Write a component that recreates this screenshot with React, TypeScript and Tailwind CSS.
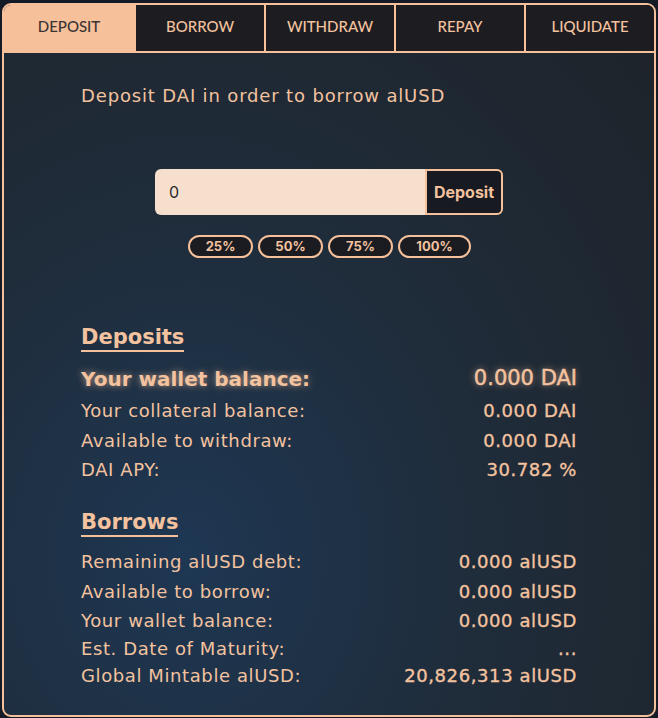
import React from "react";

const tabs = ["DEPOSIT", "BORROW", "WITHDRAW", "REPAY", "LIQUIDATE"];

const depositRows: [string, string][] = [
  ["Your collateral balance:", "0.000 DAI"],
  ["Available to withdraw:", "0.000 DAI"],
  ["DAI APY:", "30.782 %"],
];

const borrowRows: [string, string, string][] = [
  ["Remaining alUSD debt:", "0.000 alUSD", "h-[30px]"],
  ["Available to borrow:", "0.000 alUSD", "h-[30px]"],
  ["Your wallet balance:", "0.000 alUSD", "h-[29px]"],
  ["Est. Date of Maturity:", "...", "h-[27px]"],
  ["Global Mintable alUSD:", "20,826,313 alUSD", "h-[27px]"],
];

// slightly heavier stroke for the figures on the right
const figure = "[-webkit-text-stroke:0.35px_#f3c29f]";

export default function App() {
  return (
    <div className="min-h-[718px] w-[658px] bg-[#141b26] pt-[3px] pl-[2px] font-['DejaVu_Sans',sans-serif] text-[#f3c29f]">
      <div className="flex h-[714px] w-[654px] flex-col overflow-hidden rounded-[9px] border-2 border-[#f5c09a] bg-[radial-gradient(ellipse_at_28%_78%,#1e3753_0%,#1f2c3a_45%,#1e2329_100%)]">
        {/* tab strip */}
        <div className="flex h-[48px] shrink-0 border-b-2 border-[#f5c09a] font-['Lato',sans-serif] text-[15px] font-medium">
          {tabs.map((t, i) => (
            <div
              key={t}
              className={
                i === 0
                  ? "flex w-[130px] items-center justify-center bg-[#f5c09a] pb-[3px] text-[#3a3434]"
                  : "flex flex-1 items-center justify-center border-l-2 border-[#f5c09a] bg-[#1d1d21] pb-[3px] text-[#f3c29f]"
              }
            >
              {t}
            </div>
          ))}
        </div>

        <div className="mx-auto flex w-[496px] flex-col">
          <p className="mt-[31px] text-[18px] leading-[24px] tracking-[0.85px]">Deposit DAI in order to borrow alUSD</p>

          {/* amount field */}
          <div className="mt-[61px] ml-[74px] flex h-[46px] w-[348px] font-['Inter',sans-serif]">
            <div className="flex flex-1 items-center rounded-l-[6px] bg-[#f7dfcd] pl-[14px] text-[16px] text-[#2a2a2a]">
              0
            </div>
            <button className="w-[78px] rounded-r-[6px] border-2 border-[#f5c09a] bg-[#181a21] text-[16px] font-bold text-[#f3c29f]">
              Deposit
            </button>
          </div>

          <div className="mt-[20px] flex justify-center gap-[5px] pl-[1px] font-['Inter',sans-serif] text-[13px] font-bold">
            {["25%", "50%", "75%", "100%"].map((p) => (
              <button
                key={p}
                className={
                  (p === "100%" ? "w-[73px]" : "w-[65px]") +
                  " h-[23px] rounded-full border-2 border-[#f5c09a] bg-[#1b1c22] leading-none text-[#f3c29f]"
                }
              >
                {p}
              </button>
            ))}
          </div>

          {/* deposits summary */}
          <div className="mt-[66px]">
            <span className="inline-block border-b-2 border-[#f5c09a] text-[21px] font-bold leading-[26px]">Deposits</span>
          </div>
          <div className="mt-[10px] flex h-[33px] items-center justify-between text-[20px] font-bold [text-shadow:0_0_7px_rgba(245,192,154,0.7)]">
            <span>Your wallet balance:</span>
            <span className="text-[21px] font-normal [-webkit-text-stroke:0.5px_#f3c29f]">0.000 DAI</span>
          </div>
          {depositRows.map(([k, v], i) => (
            <div key={k} className={(i === 2 ? "h-[28px]" : "h-[30px]") + " flex items-center justify-between text-[18px] tracking-[0.6px]"}>
              <span>{k}</span>
              <span className={figure}>{v}</span>
            </div>
          ))}

          {/* borrows summary */}
          <div className="mt-[26px]">
            <span className="inline-block border-b-2 border-[#f5c09a] text-[21px] font-bold leading-[26px]">Borrows</span>
          </div>
          <div className="mt-[9px]">
            {borrowRows.map(([k, v, h]) => (
              <div key={k} className={h + " flex items-center justify-between text-[18px] tracking-[0.6px]"}>
                <span>{k}</span>
                <span className={figure}>{v}</span>
              </div>
            ))}
          </div>
        </div>
      </div>
    </div>
  );
}
